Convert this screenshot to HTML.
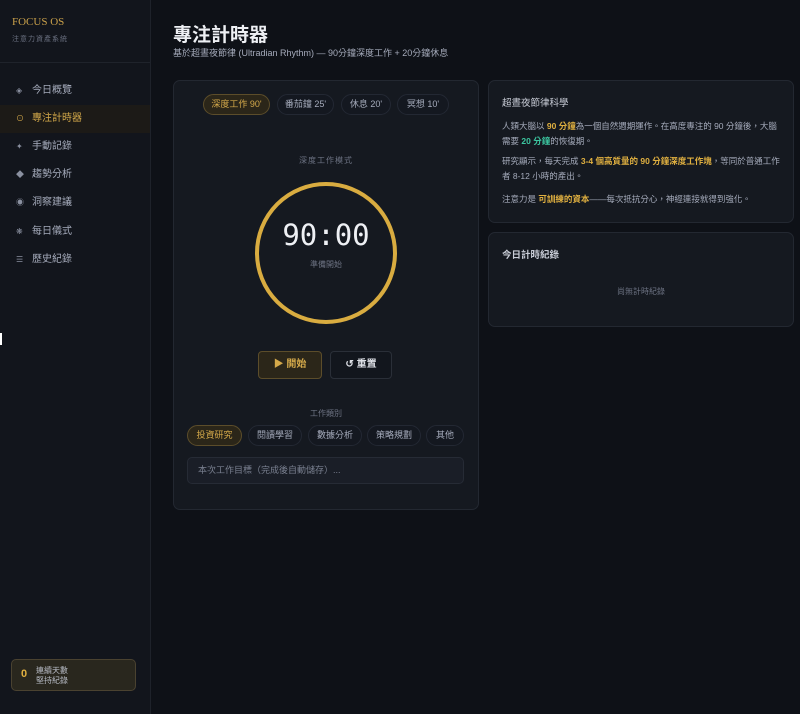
<!DOCTYPE html>
<html><head><meta charset="utf-8"><style>
*{margin:0;padding:0;box-sizing:border-box}
body{width:800px;height:714px;background:#0e1117;font-family:"Liberation Sans","Noto Sans CJK TC",sans-serif;color:#c8ccd6;position:relative;overflow:hidden}
.a{position:absolute}
.side{left:0;top:0;width:151px;height:714px;background:#12151c;border-right:1px solid #1e222a}
.logo{left:12px;top:16px;font-family:"Liberation Serif","Noto Serif CJK SC",serif;color:#c9a04a;font-size:11px}
.sub{left:12px;top:34px;font-size:7px;color:#6a7080;letter-spacing:1px}
.hr{left:0;top:62px;width:150px;height:1px;background:#1f232b}
.nav{left:0;width:150px;height:28px;font-size:10px;color:#a5abbb;line-height:28px;padding-left:16px}
.nav span{display:inline-block;width:16px;font-size:8px;color:#8a90a0}
.nav.on{background:#1c1a17;color:#d4a94a}
.nav.on span{color:#d4a94a}
.streak{left:11px;top:659px;width:125px;height:32px;border:1px solid #4a4230;background:#29271e;border-radius:5px;font-size:8px;color:#b8bcc6;line-height:10px;padding:6px 0 0 24px}
.card{background:#151920;border:1px solid #232831;border-radius:7px}
.pill{height:21px;border-radius:11px;border:1px solid #232833;background:#141820;font-size:9px;color:#a5abbb;line-height:19px;text-align:center}
.pill.on{background:#2b2619;border-color:#5c4d2a;color:#d4a94a}
.p{font-size:8.5px;line-height:15px;color:#a5abbb;white-space:nowrap}
.g{color:#e0b040;font-weight:bold}.t{color:#3cc6a0;font-weight:bold}
</style></head><body>
<div class="a side"></div>
<div class="a logo">FOCUS OS</div>
<div class="a sub">注意力資產系統</div>
<div class="a hr"></div>
<div class="a nav" style="top:77px"><span>◈</span>今日概覽</div>
<div class="a nav on" style="top:105px"><span>⊙</span>專注計時器</div>
<div class="a nav" style="top:133px"><span>✦</span>手動記錄</div>
<div class="a nav" style="top:161px"><span>◆</span>趨勢分析</div>
<div class="a nav" style="top:189px"><span>◉</span>洞察建議</div>
<div class="a nav" style="top:218px"><span>❋</span>每日儀式</div>
<div class="a nav" style="top:246px"><span>☰</span>歷史紀錄</div>
<div class="a" style="left:0;top:333px;width:2px;height:12px;background:#fff"></div>
<div class="a streak"><div class="a" style="left:9px;top:9px;color:#e0b040;font-weight:bold;font-size:11px">0</div>連續天數<br>堅持紀錄</div>

<div class="a" style="left:173px;top:20px;font-size:19px;color:#eef0f4;font-weight:bold">專注計時器</div>
<div class="a" style="left:173px;top:46px;font-size:9px;color:#a5abbb">基於超晝夜節律 (Ultradian Rhythm) — 90分鐘深度工作 + 20分鐘休息</div>

<div class="a card" style="left:173px;top:80px;width:306px;height:430px"></div>
<div class="a pill on" style="left:203px;top:94px;width:67px">深度工作 90'</div>
<div class="a pill" style="left:277px;top:94px;width:57px">番茄鐘 25'</div>
<div class="a pill" style="left:341px;top:94px;width:50px">休息 20'</div>
<div class="a pill" style="left:397px;top:94px;width:52px">冥想 10'</div>
<div class="a" style="left:173px;top:155px;width:306px;text-align:center;font-size:8px;color:#6d7383;letter-spacing:1px">深度工作模式</div>
<svg class="a" style="left:252px;top:179px" width="148" height="148"><circle cx="74" cy="74" r="69" fill="none" stroke="#d9ac40" stroke-width="4"/></svg>
<div class="a" style="left:173px;top:218px;width:306px;text-align:center;font-family:'DejaVu Sans Mono','Liberation Mono',monospace;font-size:29px;color:#eef0f4">90:00</div>
<div class="a" style="left:173px;top:259px;width:306px;text-align:center;font-size:8px;color:#6d7383">準備開始</div>
<div class="a" style="left:258px;top:351px;width:64px;height:28px;border:1px solid #5c4d2a;background:#2b2619;border-radius:4px;color:#d4a94a;font-size:10px;font-weight:bold;text-align:center;line-height:26px">▶ 開始</div>
<div class="a" style="left:330px;top:351px;width:62px;height:28px;border:1px solid #2a2f38;background:#12161d;border-radius:4px;color:#dde0e6;font-size:10px;font-weight:bold;text-align:center;line-height:26px">↺ 重置</div>
<div class="a" style="left:173px;top:408px;width:306px;text-align:center;font-size:8px;color:#6d7383">工作類別</div>
<div class="a pill on" style="left:187px;top:425px;width:55px">投資研究</div>
<div class="a pill" style="left:248px;top:425px;width:54px">閱讀學習</div>
<div class="a pill" style="left:308px;top:425px;width:54px">數據分析</div>
<div class="a pill" style="left:367px;top:425px;width:54px">策略規劃</div>
<div class="a pill" style="left:426px;top:425px;width:38px">其他</div>
<div class="a" style="left:187px;top:457px;width:277px;height:27px;border:1px solid #262b35;background:#1a1e27;border-radius:5px;font-size:9px;color:#7a8090;line-height:25px;padding-left:10px">本次工作目標（完成後自動儲存）...</div>

<div class="a card" style="left:488px;top:80px;width:306px;height:143px"></div>
<div class="a" style="left:502px;top:95px;font-size:9.5px;color:#c8ccd6">超晝夜節律科學</div>
<div class="a p" style="left:502px;top:119px">人類大腦以 <span class="g">90 分鐘</span>為一個自然週期運作。在高度專注的 90 分鐘後，大腦<br>需要 <span class="t">20 分鐘</span>的恢復期。</div>
<div class="a p" style="left:502px;top:154px">研究顯示，每天完成 <span class="g">3-4 個高質量的 90 分鐘深度工作塊</span>，等同於普通工作<br>者 8-12 小時的產出。</div>
<div class="a p" style="left:502px;top:192px">注意力是 <span class="g">可訓練的資本</span>——每次抵抗分心，神經連接就得到強化。</div>

<div class="a card" style="left:488px;top:232px;width:306px;height:95px"></div>
<div class="a" style="left:502px;top:247px;font-size:9.5px;color:#c8ccd6;font-weight:bold">今日計時紀錄</div>
<div class="a" style="left:488px;top:286px;width:306px;text-align:center;font-size:8px;color:#6d7383">尚無計時紀錄</div>
</body></html>
